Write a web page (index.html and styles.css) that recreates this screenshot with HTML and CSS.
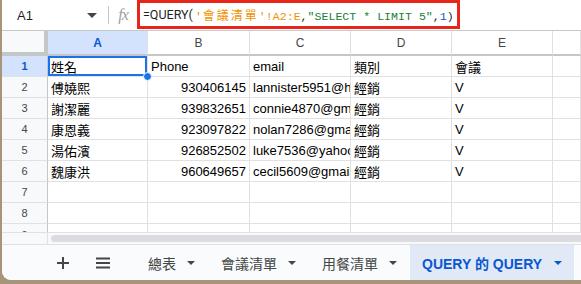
FILE: index.html
```html
<!DOCTYPE html>
<html lang="zh-Hant">
<head>
<meta charset="utf-8">
<link rel="stylesheet" href="styles.css">
</head>
<body>
<div class="window">
  <div class="fbar">
    <div class="namebox"><span>A1</span><span class="caret"></span></div>
    <div class="sep"></div>
    <div class="fx">fx</div>
    <div class="formula"><span class="fn">=QUERY(</span><span class="mono"><span class="rng">'<span class="cjk">會議清單</span>'!A2:E</span>,<span class="str">"SELECT * LIMIT 5"</span>,<span class="num">1</span>)</span></div>
  </div>
  <div class="grid">
    <div class="corner"></div>
    <div class="ch sel">A</div><div class="ch">B</div><div class="ch">C</div><div class="ch">D</div><div class="ch">E</div><div class="ch last"></div>

    <div class="rh sel">1</div>
    <div class="c active">姓名<span class="handle"></span></div><div class="c">Phone</div><div class="c">email</div><div class="c">類別</div><div class="c">會議</div><div class="c last"></div>

    <div class="rh">2</div>
    <div class="c">傅嬈熙</div><div class="c r">930406145</div><div class="c"><span class="clip">lannister5951@hotmail.com</span></div><div class="c">經銷</div><div class="c">V</div><div class="c last"></div>

    <div class="rh">3</div>
    <div class="c">謝潔麗</div><div class="c r">939832651</div><div class="c"><span class="clip">connie4870@gmail.com</span></div><div class="c">經銷</div><div class="c">V</div><div class="c last"></div>

    <div class="rh">4</div>
    <div class="c">康恩義</div><div class="c r">923097822</div><div class="c"><span class="clip">nolan7286@gmail.com</span></div><div class="c">經銷</div><div class="c">V</div><div class="c last"></div>

    <div class="rh">5</div>
    <div class="c">湯佑濱</div><div class="c r">926852502</div><div class="c"><span class="clip">luke7536@yahoo.com</span></div><div class="c">經銷</div><div class="c">V</div><div class="c last"></div>

    <div class="rh">6</div>
    <div class="c">魏康洪</div><div class="c r">960649657</div><div class="c"><span class="clip">cecil5609@gmail.com</span></div><div class="c">經銷</div><div class="c">V</div><div class="c last"></div>

    <div class="rh">7</div>
    <div class="c"></div><div class="c"></div><div class="c"></div><div class="c"></div><div class="c"></div><div class="c last"></div>

    <div class="rh">8</div>
    <div class="c"></div><div class="c"></div><div class="c"></div><div class="c"></div><div class="c"></div><div class="c last"></div>

    <div class="rh r9">9</div>
    <div class="c"></div><div class="c"></div><div class="c"></div><div class="c"></div><div class="c"></div><div class="c last"></div>
  </div>
  <div class="hscroll"><div class="hs-left"></div><div class="thumb"></div></div>
  <div class="tabs">
    <div class="tbtn plus">
      <svg width="14" height="14" viewBox="0 0 14 14"><path d="M7 1v12M1 7h12" stroke="#444746" stroke-width="2"/></svg>
    </div>
    <div class="tbtn menu">
      <svg width="16" height="12" viewBox="0 0 16 12"><path d="M1 1.5h14M1 6h14M1 10.5h14" stroke="#444746" stroke-width="2"/></svg>
    </div>
    <div class="tab first">總表<span class="tcaret"></span></div>
    <div class="tab">會議清單<span class="tcaret"></span></div>
    <div class="tab">用餐清單<span class="tcaret"></span></div>
    <div class="tab on">QUERY 的 QUERY<span class="tcaret"></span></div>
  </div>
</div>
</body>
</html>
```
FILE: styles.css
```css
* { box-sizing: border-box; }
html, body { margin: 0; padding: 0; }
body {
  width: 581px;
  height: 284px;
  background: #a89479;
  overflow: hidden;
  font-family: Arial, "Liberation Sans", "Noto Sans CJK TC", sans-serif;
}
.window {
  margin-left: 2px;
  width: 579px;
  height: 280px;
  background: #fff;
  border-bottom-left-radius: 9px;
  overflow: hidden;
  display: flex;
  flex-direction: column;
}
.fbar {
  height: 31px;
  flex: none;
  display: flex;
  align-items: center;
  border-bottom: 1px solid #c7c7c7;
}
.namebox {
  width: 100px;
  display: flex;
  align-items: center;
  padding-left: 15px;
  font-size: 13px;
  color: #1f1f1f;
}
.namebox span:first-child { flex: 1; }
.caret {
  width: 0; height: 0;
  border-left: 5px solid transparent;
  border-right: 5px solid transparent;
  border-top: 5px solid #444746;
  margin-right: 5px;
}
.sep {
  width: 1px;
  height: 18px;
  background: #c7c7c7;
  margin-left: 6px;
}
.fx {
  width: 28px;
  text-align: center;
  font-family: "Liberation Serif", serif;
  font-style: italic;
  font-size: 16px;
  color: #a0a0a0;
  letter-spacing: -1px;
}
.formula {
  height: 29px;
  margin-top: -1px;
  width: 323px;
  border: 3px solid #e8251b;
  display: flex;
  align-items: center;
  padding-left: 3px;
  color: #1f1f1f;
  white-space: nowrap;
}
.fn {
  font-family: Roboto, "Liberation Sans", sans-serif;
  font-size: 12.5px;
}
.mono {
  font-family: "Liberation Mono", "Noto Sans CJK TC", monospace;
  font-size: 11.6px;
  margin-left: 2px;
}
.cjk {
  font-family: "Noto Sans CJK TC", sans-serif;
  font-size: 12px;
  letter-spacing: 2px;
  margin-left: 1px;
}
.rng { color: #f09300; }
.str { color: #188038; }
.num { color: #1155cc; }

.grid {
  flex: none;
  height: 201px;
  overflow: hidden;
  display: grid;
  grid-template-columns: 46px 100px 102px 101px 101px 101px 28px;
  grid-template-rows: 25px repeat(9, 21px);
  font-size: 13px;
  color: #000;
}
.corner {
  background: #f8f9fa;
  border-right: 4px solid #c4c7c5;
  border-bottom: 4px solid #c4c7c5;
}
.ch {
  display: flex;
  align-items: center;
  justify-content: center;
  font-size: 12px;
  color: #444746;
  background: #fff;
  border-right: 1px solid #e1e1e1;
  border-bottom: 2px solid #c4c7c5;
}
.ch.sel {
  background: #d3e3fd;
  color: #0b57d0;
  font-weight: bold;
}
.rh {
  display: flex;
  align-items: center;
  justify-content: center;
  font-size: 11px;
  color: #444746;
  background: #f8f9fa;
  border-right: 1px solid #c4c7c5;
  border-bottom: 1px solid #e1e1e1;
}
.rh.r9 { align-items: flex-start; padding-top: 5px; }
.rh.sel {
  background: #d3e3fd;
  color: #0b57d0;
  font-weight: bold;
}
.c {
  position: relative;
  display: flex;
  align-items: center;
  padding: 0 3px;
  white-space: nowrap;
  overflow: hidden;
  min-width: 0;
  border-right: 1px solid #e1e1e1;
  border-bottom: 1px solid #e1e1e1;
}
.clip { flex: none; }
.c.r { justify-content: flex-end; }
.c.active {
  overflow: visible;
  box-shadow: inset 0 0 0 2px #1a73e8;
  z-index: 2;
}
.handle {
  position: absolute;
  right: -5px;
  bottom: -5px;
  width: 9px;
  height: 9px;
  border-radius: 50%;
  background: #1a73e8;
  border: 1px solid #fff;
}
.hscroll {
  height: 13px;
  flex: none;
  display: flex;
  background: #f8f9fa;
  border-bottom: 1px solid #e1e1e1;
  border-top: 1px solid #e1e1e1;
}
.hs-left {
  width: 46px;
  border-right: 1px solid #e1e1e1;
}
.thumb {
  flex: 1;
  margin: 2px 0 2px 3px;
  background: #dadce0;
  border-radius: 5px 0 0 5px;
}
.tabs {
  flex: 1;
  display: flex;
  align-items: stretch;
  background: #f9fbfd;
  padding-left: 46px;
  white-space: nowrap;
}
.tbtn {
  flex: none;
  display: flex;
  align-items: center;
  justify-content: center;
  width: 30px;
}
.tbtn.menu { width: 50px; }
.tab {
  flex: none;
  display: flex;
  align-items: center;
  padding-left: 26px;
  font-size: 14px;
  color: #444746;
}
.tab.first { padding-left: 20px; }
.tab.on {
  margin-left: 13px;
  padding: 0 12px 0 12px;
  background: #e1e9f7;
  color: #0b57d0;
  font-weight: bold;
}
.tcaret {
  width: 0; height: 0;
  border-left: 4px solid transparent;
  border-right: 4px solid transparent;
  border-top: 4px solid #444746;
  margin-left: 11px;
}
.tab.on .tcaret {
  border-top-color: #0b57d0;
  margin-left: 12px;
}
```
